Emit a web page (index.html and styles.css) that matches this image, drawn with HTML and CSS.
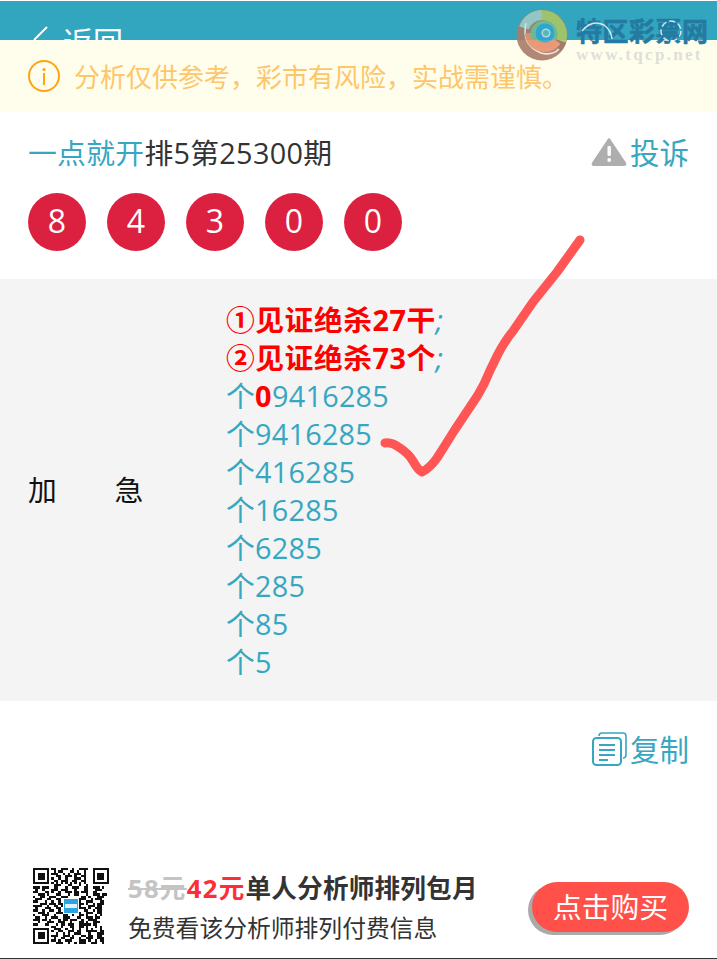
FILE: index.html
```html
<!DOCTYPE html>
<html lang="zh-CN">
<head>
    <meta charset="UTF-8">
    <meta name="viewport" content="width=device-width, initial-scale=1.0">
    <title>一点就开排5第25300期</title>
    <link rel="stylesheet" href="styles.css">
</head>
<body>
    <header class="top-bar">
        <svg class="back-icon" width="18" height="30" viewBox="0 0 18 30"><path d="M16 2 L3 15" fill="none" stroke="#fff" stroke-width="2"/></svg>
        <span class="back-text">返回</span>
    </header>

    <div class="notice">
        <svg class="notice-icon" width="34" height="34" viewBox="0 0 34 34">
            <circle cx="17" cy="17" r="15" fill="none" stroke="#ffa312" stroke-width="2"/>
            <circle cx="17" cy="10.5" r="1.6" fill="#ffa312"/>
            <rect x="16" y="14" width="2" height="12" fill="#ffa312"/>
        </svg>
        <span>分析仅供参考，彩市有风险，实战需谨慎。</span>
    </div>

    <section class="issue">
        <div class="issue-head">
            <h1 class="issue-title"><span class="teal">一点就开</span>排5第25300期</h1>
            <a class="link-action">
                <svg width="36" height="30" viewBox="0 0 36 30">
                    <path d="M18 3 L34 27 Q35 29 33 29 L3 29 Q1 29 2 27 Z" fill="#aeaeae" stroke="#aeaeae" stroke-width="2" stroke-linejoin="round"/>
                    <rect x="16.5" y="10" width="3.4" height="10" rx="1.2" fill="#fff"/>
                    <circle cx="18.2" cy="24" r="1.9" fill="#fff"/>
                </svg>
                <span>投诉</span>
            </a>
        </div>
        <div class="balls">
            <span class="ball">8</span>
            <span class="ball">4</span>
            <span class="ball">3</span>
            <span class="ball">0</span>
            <span class="ball">0</span>
        </div>
    </section>

    <section class="plan">
        <div class="plan-label">加　　急</div>
        <div class="plan-lines">
            <div><b class="red">①见证绝杀27干</b><i>;</i></div>
            <div><b class="red">②见证绝杀73个</b><i>;</i></div>
            <div>个<b class="red">0</b>9416285</div>
            <div>个9416285</div>
            <div>个416285</div>
            <div>个16285</div>
            <div>个6285</div>
            <div>个285</div>
            <div>个85</div>
            <div>个5</div>
        </div>
    </section>

    <div class="copy-row">
        <a class="link-action">
            <svg width="36" height="36" viewBox="0 0 36 36" fill="none" stroke="#37a7c1" stroke-width="1.6">
                <path d="M8 5 Q8 2 11 2 L32 2 Q35 2 35 5 L35 24 Q35 27 32 27"/>
                <rect x="2" y="7" width="28" height="27" rx="3.5" stroke-width="2"/>
                <path d="M8 14 H24 M8 19 H24 M8 24 H24 M8 29 H17" stroke-width="2"/>
            </svg>
            <span>复制</span>
        </a>
    </div>

    <footer class="buy-bar">
        <svg class="qr" width="76" height="76" viewBox="0 0 33 33" shape-rendering="crispEdges">
            <path fill="#111" fill-rule="evenodd" d="M0 0h7v7H0zM1 1v5h5V1zM2 2h3v3H2zM26 0h7v7h-7zM27 1v5h5V1zM28 2h3v3h-3zM0 26h7v7H0zM1 27v5h5v-5zM2 28h3v3H2z"/>
            <path fill="none" stroke="#111" d="M8 .5h2m2 0h3m2 0h1m2 0h4
                M9 1.5h1m1 0h2m3 0h2m1 0h1m2 0h1
                M8 2.5h3m2 0h1m1 0h1m2 0h3m1 0h1
                M10 3.5h2m2 0h3m1 0h1m2 0h2
                M8 4.5h1m2 0h1m2 0h1m3 0h3m1 0h1
                M9 5.5h2m1 0h3m2 0h2m2 0h2
                M8 6.5h1m1 0h1m1 0h1m1 0h1m1 0h1m1 0h1m1 0h1m1 0h1
                M9 7.5h3m3 0h2m3 0h1m2 0h1
                M0 8.5h3m1 0h3m2 0h2m3 0h1m2 0h3m2 0h2m2 0h3m1 0h1
                M1 9.5h1m2 0h1m3 0h3m1 0h3m3 0h1m3 0h2m3 0h3
                M0 10.5h2m3 0h2m1 0h1m2 0h1m2 0h3m1 0h2m1 0h3m2 0h2
                M2 11.5h3m1 0h1m3 0h2m3 0h1m2 0h2m3 0h1m2 0h3m1 0h2
                M0 12.5h1m2 0h2m2 0h3m2 0h3m6 0h2m1 0h1m3 0h3
                M1 13.5h3m2 0h2m2 0h2m8 0h3m2 0h1m1 0h3
                M0 14.5h2m3 0h1m2 0h1m2 0h1m8 0h1m2 0h3m3 0h2
                M3 15.5h3m1 0h3m1 0h2m7 0h2m1 0h1m2 0h1m1 0h3
                M0 16.5h4m2 0h1m2 0h2m1 0h1m7 0h1m3 0h3m1 0h2
                M1 17.5h1m3 0h3m2 0h2m8 0h3m1 0h1m2 0h3
                M0 18.5h2m2 0h1m2 0h2m2 0h1m7 0h1m2 0h2m2 0h1m1 0h2
                M2 19.5h3m1 0h1m3 0h3m1 0h2m3 0h2m2 0h3m2 0h2
                M0 20.5h1m3 0h3m2 0h1m3 0h2m2 0h1m2 0h2m1 0h1m3 0h1m1 0h1
                M1 21.5h2m2 0h1m2 0h3m2 0h3m3 0h2m2 0h3m1 0h2
                M0 22.5h3m1 0h2m1 0h1m3 0h1m1 0h2m1 0h3m2 0h1m2 0h4
                M2 23.5h1m3 0h3m2 0h3m2 0h1m3 0h2m1 0h1m2 0h3
                M0 24.5h2m3 0h2m3 0h1m1 0h2m1 0h3m2 0h5m1 0h2
                M8 25.5h2m2 0h1m3 0h2m2 0h2m1 0h1m3 0h1m1 0h1
                M9 26.5h3m2 0h1m2 0h1m2 0h1m2 0h1m1 0h1m3 0h1
                M8 27.5h1m2 0h2m2 0h3m1 0h2m2 0h5m1 0h2
                M10 28.5h1m2 0h1m1 0h1m2 0h3m3 0h1m3 0h3
                M8 29.5h3m2 0h3m1 0h1m3 0h2m1 0h2m2 0h2
                M9 30.5h1m2 0h2m2 0h2m2 0h1m2 0h3m2 0h3
                M8 31.5h2m1 0h1m2 0h3m3 0h3m1 0h1m2 0h1m1 0h2
                M10 32.5h3m2 0h1m2 0h1m1 0h3m2 0h3m2 0h1"/>
            <rect x="13" y="13" width="7" height="7" fill="#fff"/>
            <rect x="13.5" y="13.5" width="6" height="6" fill="#2aa5e0"/>
            <rect x="14" y="15.6" width="5" height="1.8" fill="#dff2fb"/>
        </svg>
        <div class="buy-info">
            <div class="buy-title"><s class="old-price">58元</s><span class="new-price">42元</span>单人分析师排列包月</div>
            <div class="buy-desc">免费看该分析师排列付费信息</div>
        </div>
        <button class="buy-btn">点击购买</button>
    </footer>

    <!-- hand drawn tick on top of the page -->
    <svg class="tick" width="717" height="959" viewBox="0 0 717 959">
        <path d="M385 443 Q392 442 400 448 Q408 453 413 461 Q418 470 422 472 Q430 468 437 458 Q446 444 454 431 L470 407 Q478 396 484 384 Q490 370 497 356 Q504 342 513 331 L533 302 L557 272 L580 240" fill="none" stroke="#ff5555" stroke-width="9" stroke-linecap="round" stroke-linejoin="round"/>
    </svg>

    <!-- site watermark -->
    <div class="watermark">
        <svg class="wm-logo" width="52" height="52" viewBox="0 0 52 52" fill="none">
            <circle cx="26" cy="26" r="25.5" fill="#a87c69"/>
            <path d="M8 19 A19 19 0 0 1 26 6" stroke="#9dcbc6" stroke-width="10"/>
            <path d="M26 6 A20 20 0 0 1 45 32" stroke="#a9c765" stroke-width="10"/>
            <path d="M41 39 A20 20 0 0 0 45 32" stroke="#9c6d5a" stroke-width="10"/>
            <path d="M10 14 Q5 36 25 44 Q36 47 43 40" stroke="#f0e6d8" stroke-width="1.6"/>
            <path d="M12 24 Q13 38 28 40 Q37 40 42 33" stroke="#e8906c" stroke-width="6"/>
            <circle cx="28" cy="25" r="13.5" fill="#73bd8c"/>
            <path d="M15 29 A13.5 13.5 0 0 0 41 29 Q30 37 15 29Z" fill="#ea8d68"/>
            <circle cx="29" cy="24" r="9.5" fill="#2fa6d8"/>
            <circle cx="30" cy="24" r="4.6" fill="#bfe0d0"/>
            <circle cx="30" cy="24" r="3" fill="#5fb7b8"/>
        </svg>
        <div class="watermark-text">
            <div class="wm-name">特区彩票网</div>
            <div class="wm-url">www.tqcp.net</div>
            <svg class="wm-arcs" width="132" height="30" viewBox="0 0 132 30" fill="none" stroke="#fff" stroke-width="1.5">
                <path d="M6 14 Q16 2 28 8 Q35 13 36 22"/>
                <circle cx="95" cy="14" r="10" stroke-dasharray="6 3"/>
            </svg>
        </div>
    </div>
</body>
</html>
```

FILE: styles.css
```css
/* General Reset */
* {
    margin: 0;
    padding: 0;
    box-sizing: border-box;
}

body {
    font-family: "Open Sans", "Noto Sans CJK SC", sans-serif;
    font-size: 28.8px;
    color: #333;
    background: #fff;
    width: 717px;
    height: 959px;
    overflow: hidden;
    position: relative;
}

.teal {
    color: #37a7c1;
}

.red {
    color: #f00;
    font-weight: bold;
}

.top-bar {
    height: 40px;
    margin-top: 1px;
    margin-bottom: -1px;
    background: #32a5bf;
    color: #fff;
    display: flex;
    align-items: flex-start;
    gap: 14px;
    padding: 24px 0 0 31px;
    overflow: hidden;
}

.back-text {
    font-size: 30px;
    line-height: 34px;
}

.notice {
    height: 72px;
    background: #fffeec;
    color: #fdc66b;
    font-size: 26px;
    display: flex;
    align-items: center;
    gap: 13px;
    padding-left: 27px;
}

.issue {
    height: 167px;
    padding: 21px 28px 0 28px;
}

.issue-head {
    display: flex;
    justify-content: space-between;
    align-items: center;
    height: 40px;
}

.issue-title {
    font-size: 28.8px;
    font-weight: normal;
    line-height: 40px;
    letter-spacing: 0.3px;
}

.link-action {
    display: flex;
    align-items: center;
    gap: 3px;
    color: #37a7c1;
    font-size: 29.5px;
}

.issue-head .link-action {
    margin-top: -4px;
}

.balls {
    display: flex;
    gap: 21px;
    margin-top: 20px;
}

.ball {
    width: 58px;
    height: 58px;
    border-radius: 50%;
    background: #dc2140;
    color: #fff;
    font-size: 32px;
    line-height: 56px;
    text-align: center;
}

.plan {
    height: 422px;
    background: #f4f4f4;
    display: flex;
    align-items: center;
    padding: 2px 0 0 28px;
}

.plan-label {
    width: 198px;
    margin-bottom: 6px;
    color: #111;
}

.plan-lines {
    color: #37a7c1;
    line-height: 38px;
    letter-spacing: 0.25px;
}

.plan-lines .red {
    letter-spacing: 0.5px;
}

.copy-row {
    display: flex;
    justify-content: flex-end;
    padding: 26px 28px 0 0;
}

.buy-bar {
    position: absolute;
    left: 0;
    right: 0;
    bottom: 0;
    height: 99px;
    display: flex;
    align-items: center;
    padding: 0 28px 6px 33px;
    border-bottom: 1px solid #333;
}

.qr {
    filter: blur(0.4px);
}

.buy-info {
    flex: 1;
    margin: 5px 0 0 19px;
}

.buy-title {
    font-size: 25.6px;
    font-weight: bold;
    line-height: 40px;
    letter-spacing: 0.2px;
    white-space: nowrap;
}

.old-price {
    color: #c4c4c4;
}

.old-price,
.new-price {
    letter-spacing: 1.3px;
}

.new-price {
    color: #ff2d36;
}

.buy-desc {
    font-size: 23.8px;
    line-height: 39px;
}

.buy-btn {
    width: 157px;
    height: 50px;
    margin-top: 2px;
    padding-bottom: 3px;
    border: none;
    border-radius: 25px;
    background: #ff504a;
    color: #fff;
    font: inherit;
    box-shadow: -4px 3px 0 #aaa;
}

.tick {
    position: absolute;
    left: 0;
    top: 0;
    pointer-events: none;
}

.watermark {
    position: absolute;
    left: 516px;
    top: 9px;
    display: flex;
    gap: 8px;
}

.wm-logo {
    opacity: 0.9;
}

.watermark-text {
    position: relative;
    padding-top: 9px;
}

.wm-name {
    font-size: 26px;
    font-weight: bold;
    line-height: 26px;
    letter-spacing: 0.5px;
    color: #257aa2;
    -webkit-text-stroke: 0.6px #257aa2;
    white-space: nowrap;
}

.wm-url {
    font-family: "Liberation Serif", serif;
    font-size: 17px;
    font-weight: bold;
    letter-spacing: 2.3px;
    line-height: 20px;
    color: #dedfd8;
    margin-top: 1px;
    white-space: nowrap;
}

.wm-arcs {
    position: absolute;
    left: 0;
    top: 8px;
    opacity: 0.8;
}
```
